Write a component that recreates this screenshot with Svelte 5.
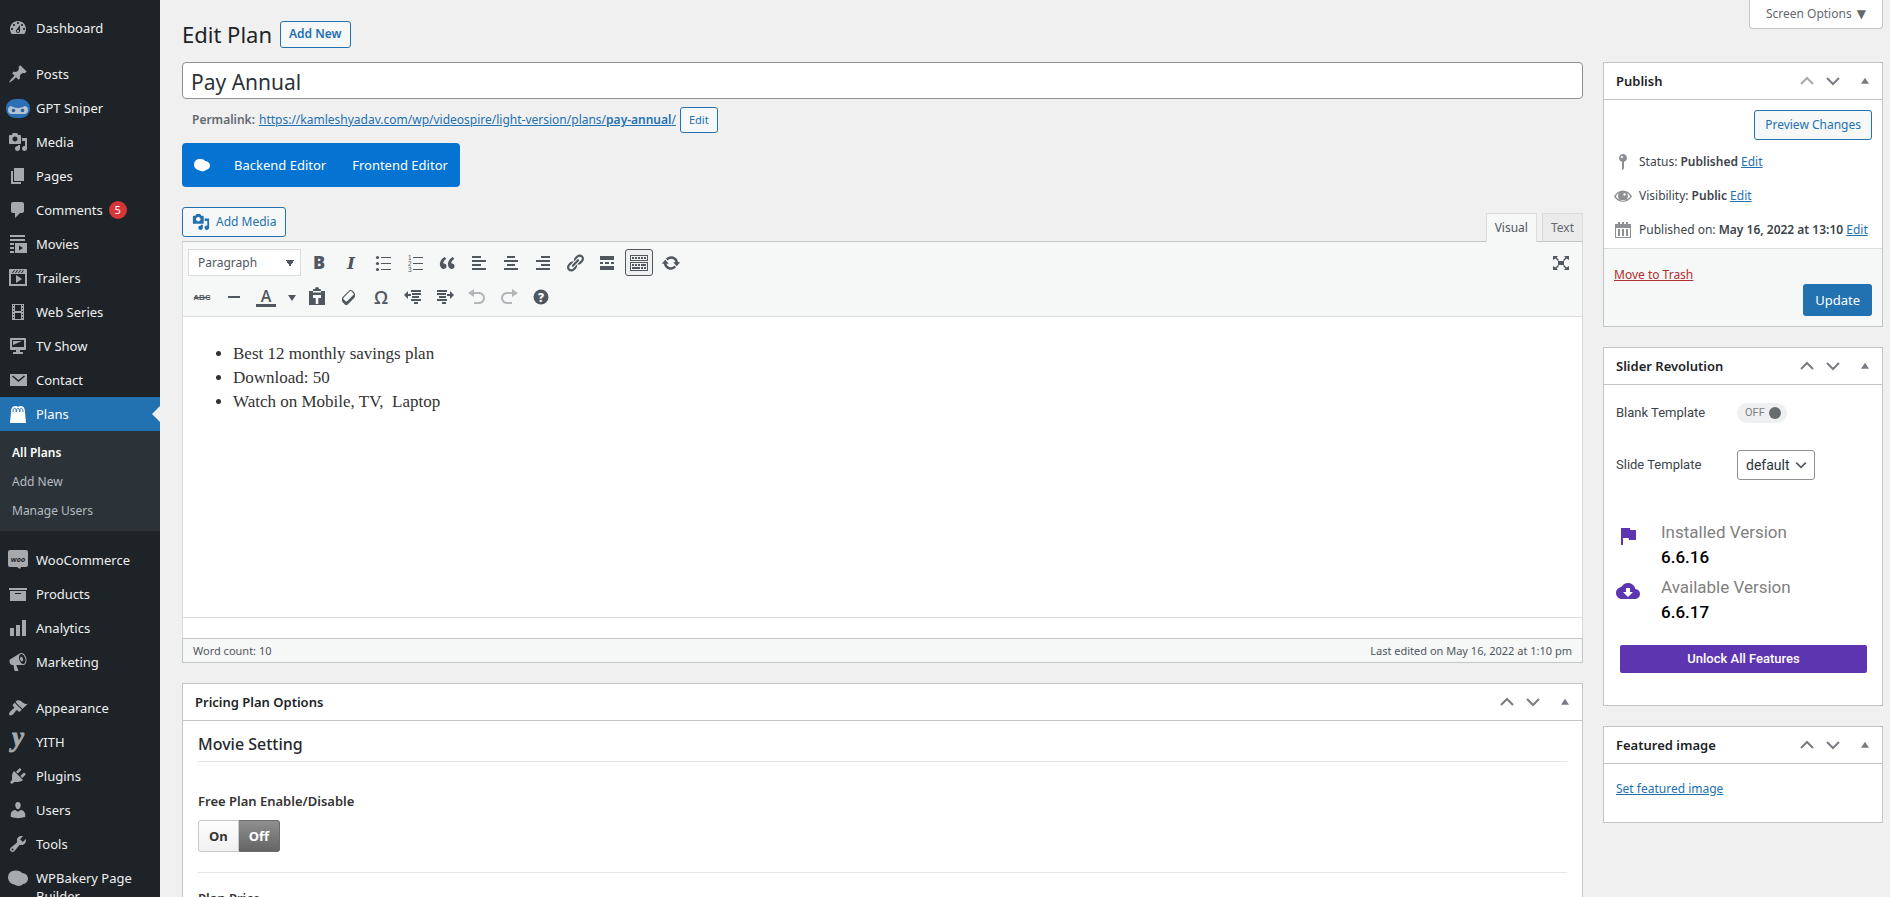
<script lang="ts">
  const path = (d: string) => `<path d="${d}"/>`
  const line = (d: string, w = 1.5) => `<path d="${d}" fill="none" stroke="currentColor" stroke-width="${w}"/>`
  const hole = (d: string) => `<path fill-rule="evenodd" d="${d}"/>`

  const icons: Record<string, string> = {
    dashboard: path('M3.76 16h12.48c1.1-1.37 1.76-3.11 1.76-5 0-4.42-3.58-8-8-8s-8 3.58-8 8c0 1.89.66 3.63 1.76 5zM10 4c.55 0 1 .45 1 1s-.45 1-1 1-1-.45-1-1 .45-1 1-1zM6 6c.55 0 1 .45 1 1s-.45 1-1 1-1-.45-1-1 .45-1 1-1zm8 0c.55 0 1 .45 1 1s-.45 1-1 1-1-.45-1-1 .45-1 1-1zm-5.37 5.55L12 7v6c0 1.1-.9 2-2 2s-2-.9-2-2c0-.57.24-1.08.63-1.45zM4 10c.55 0 1 .45 1 1s-.45 1-1 1-1-.45-1-1 .45-1 1-1zm12 0c.55 0 1 .45 1 1s-.45 1-1 1-1-.45-1-1 .45-1 1-1zm-5 3c0-.55-.45-1-1-1s-1 .45-1 1 .45 1 1 1 1-.45 1-1z'),
    pin: path('M10.44 3.02l1.82-1.82 6.36 6.35-1.83 1.82c-1.05-.68-2.48-.57-3.41.36l-.75.75c-.92.93-1.04 2.35-.35 3.41l-1.83 1.82-2.41-2.41-2.8 2.79c-.42.42-3.38 2.71-3.8 2.29s1.86-3.39 2.28-3.81l2.79-2.79L4.1 9.36l1.83-1.82c1.05.69 2.48.57 3.4-.36l.75-.75c.93-.92 1.05-2.35.36-3.41z'),
    sniper: '<rect x="-2" y="1" width="24" height="19" rx="9" fill="#2c6fb5"/><rect x="0" y="8" width="20" height="8" rx="4" fill="#b4c3d3"/><circle cx="5.5" cy="12.5" r="1.8" fill="#2c5d94"/><circle cx="14.5" cy="12.5" r="1.8" fill="#2c5d94"/><path d="M3 8q7 4 14 0z" fill="#2c6fb5"/>',
    media: path('M13 11V4c0-.55-.45-1-1-1h-1.67L9 1H5L3.67 3H2c-.55 0-1 .45-1 1v7c0 .55.45 1 1 1h10c.55 0 1-.45 1-1zM7 4.5c1.38 0 2.5 1.12 2.5 2.5S8.38 9.5 7 9.5 4.5 8.38 4.5 7 5.62 4.5 7 4.5zM14 6h5v10.5c0 1.38-1.12 2.5-2.5 2.5S14 17.88 14 16.5s1.12-2.5 2.5-2.5c.17 0 .34.02.5.05V9h-3V6zm-4 8.05V13h2v3.5c0 1.38-1.12 2.5-2.5 2.5S7 17.88 7 16.5 8.12 14 9.5 14c.17 0 .34.02.5.05z'),
    pages: path('M6 15V2h10v13H6zm-1 1h8v2H3V5h2v11z'),
    comments: path('M5 2h9c1.1 0 2 .9 2 2v7c0 1.1-.9 2-2 2h-2l-5 5v-5H5c-1.1 0-2-.9-2-2V4c0-1.1.9-2 2-2z'),
    movies: hole('M2 1h15v2H2zM2 5h15v2H2zM2 9h4v2H2zM2 13h4v2H2zM2 17h4v2H2zM7 9h12v10H7zM11 11.5v5l4-2.5z'),
    trailers: hole('M2 1h16c.55 0 1 .45 1 1v16H1V2c0-.55.45-1 1-1zM6 2L4 5h1l2-3zM9 2L7 5h1l2-3zM12 2l-2 3h1l2-3zM15 2l-2 3h1l2-3zM17 16V6H3v10zM8 7l6 4-6 4z'),
    series: hole('M4 2h12v16H4zM7 3v6h6V3zM7 11v6h6v-6zM5 3v1h1V3zM5 6v1h1V6zM5 9v1h1V9zM5 12v1h1v-1zM5 15v1h1v-1zM14 3v1h1V3zM14 6v1h1V6zM14 9v1h1V9zM14 12v1h1v-1zM14 15v1h1v-1z'),
    tv: path('M3 2h14c.55 0 1 .45 1 1v10c0 .55-.45 1-1 1h-5v2h2c.55 0 1 .45 1 1v1H5v-1c0-.55.45-1 1-1h2v-2H3c-.55 0-1-.45-1-1V3c0-.55.45-1 1-1zm13 9V4H4v7h12zM5 5h9L5 9V5z'),
    email: path('M2 4h17v12H2z') + '<path d="M4.5 6l6 5 6-5" fill="none" stroke="#1d2327" stroke-width="1.6"/>',
    bag: path('M2 19L3 8c0-4 1.5-6 4-6 1.4 0 2.3.3 3 1 .7-.7 1.6-1 3-1 2.5 0 4 2 4 6l1 11z') + '<path d="M5 8c0-5 3.3-5 3.3 0M8.3 8c0-5 3.4-5 3.4 0M11.7 8c0-5 3.3-5 3.3 0" fill="none" stroke="#2271b1" stroke-width="1"/>',
    woo: path('M2 0h16a2 2 0 0 1 2 2v13a2 2 0 0 1-2 2h-5l-1 2-3-2H2a2 2 0 0 1-2-2V2a2 2 0 0 1 2-2z') + '<text x="10" y="12" text-anchor="middle" font-family="Lato, sans-serif" font-size="8" font-weight="900" font-style="italic" fill="#1d2327">woo</text>',
    archive: path('M19 4v2H1V4h18zM2 7h16v10H2V7zm11 3V9H7v1h6z'),
    chart: path('M18 18V2h-4v16h4zm-6 0V7H8v11h4zm-6 0v-8H2v8h4z'),
    megaphone: path('M18.15 5.94c.46 1.62.38 3.22-.02 4.48-.42 1.28-1.26 2.18-2.3 2.48-.16.06-.26.06-.4.06-.06.02-.12.02-.18.02-.06.02-.14.02-.22.02h-6.8l2.22 5.5c.02.14-.06.26-.14.34-.08.1-.24.16-.34.16H6.95c-.1 0-.26-.06-.34-.16-.08-.08-.16-.2-.14-.34l-1-5.5H4.25l-.02-.02c-.5.06-1.08-.18-1.54-.62s-.88-1.08-1.06-1.88c-.24-.8-.2-1.56-.02-2.2.18-.62.58-1.08 1.06-1.3l.02-.02 9-5.4c.1-.06.18-.1.24-.16.06-.04.14-.08.24-.12.16-.08.28-.12.5-.18 1.04-.3 2.24.1 3.22.98s1.84 2.24 2.26 3.86zm-2.58 5.98h-.02c.4-.1.74-.34 1.04-.7.58-.7.86-1.76.86-3.04 0-.64-.1-1.3-.28-1.98-.34-1.36-1.02-2.5-1.78-3.24s-1.68-1.1-2.46-.88c-.82.22-1.4.96-1.7 2-.32 1.04-.28 2.36.06 3.72.38 1.36 1 2.5 1.8 3.24.78.74 1.62 1.1 2.48.88zm-2.54-7.08c.22-.04.42-.02.62.04.38.16.76.48 1.02 1s.42 1.2.42 1.78c0 .3-.04.56-.12.8-.18.48-.44.84-.86.94-.34.1-.8-.06-1.14-.4s-.64-.86-.78-1.5c-.18-.62-.12-1.24.02-1.72s.48-.84.82-.94z'),
    brush: path('M14.48 11.06L7.41 3.99l1.5-1.5c.5-.56 2.3-.47 3.51.32 1.21.8 1.43 1.28 2.91 2.1 1.18.64 2.45 1.26 4.45.85zm-.71.71L6.7 4.7 4.93 6.47c-.39.39-.39 1.02 0 1.41l1.06 1.06c.39.39.39 1.03 0 1.42-.6.6-1.43 1.11-2.21 1.69-.35.26-.7.53-1.01.84C1.43 14.23.4 16.08 1.4 17.07c.99 1 2.84-.03 4.18-1.36.31-.31.58-.66.85-1.02.57-.78 1.08-1.61 1.69-2.21.39-.39 1.02-.39 1.41 0l1.06 1.06c.39.39 1.02.39 1.41 0z'),
    yith: '<text x="10" y="14" text-anchor="middle" font-family="Liberation Serif, serif" font-size="27" font-weight="700" font-style="italic" stroke="currentColor" stroke-width=".8">y</text>',
    plug: path('M13.11 4.36L9.87 7.6 8 5.73l3.24-3.24c.35-.34 1.05-.2 1.56.32.52.51.66 1.21.31 1.55zm-8 1.77l.91-1.12 9.01 9.01-1.19.84c-.71.71-2.63 1.16-3.82 1.16H6.14L4.9 17.26c-.59.59-1.54.59-2.12 0-.59-.58-.59-1.53 0-2.12l1.24-1.24v-3.88c0-1.13.4-3.19 1.09-3.89zm7.26 3.97l3.24-3.24c.34-.35 1.04-.21 1.55.31.52.51.66 1.21.31 1.55l-3.24 3.25z'),
    user: path('M10 9.25c-2.27 0-2.73-3.44-2.73-3.44C7 4.02 7.82 2 9.97 2c2.16 0 2.98 2.02 2.71 3.81 0 0-.41 3.44-2.68 3.44zm0 2.57L12.72 10c2.39 0 4.52 2.33 4.52 4.53v2.49s-3.65 1.13-7.24 1.13c-3.65 0-7.24-1.13-7.24-1.13v-2.49c0-2.25 1.94-4.48 4.47-4.48z'),
    wrench: path('M16.68 9.77c-1.34 1.34-3.3 1.67-4.95.99l-5.41 6.52c-.99.99-2.59.99-3.58 0s-.99-2.59 0-3.57l6.52-5.42c-.68-1.65-.35-3.61.99-4.95 1.28-1.28 3.12-1.62 4.72-1.06l-2.89 2.89 2.82 2.82 2.86-2.87c.53 1.58.18 3.39-1.08 4.65zM3.81 16.21c.4.39 1.04.39 1.43 0 .4-.4.4-1.04 0-1.43-.39-.4-1.03-.4-1.43 0-.39.39-.39 1.03 0 1.43z'),
    blob: path('M0 9a7 6.5 0 0 1 8-6.5c3 0 5 1 6 2.500 3.500.3 6 2.500 6 5.500 0 3.500-3 5.500-5 5.500-1.500 2.500-7 2.500-8.500.5C2.500 16 0 13 0 9z'),
    bold: '<text x="10" y="16" text-anchor="middle" font-family="Open Sans, sans-serif" font-size="18" font-weight="800">B</text>',
    italic: '<text x="10" y="16" text-anchor="middle" font-family="DejaVu Serif, serif" font-size="17" font-weight="700" font-style="italic">I</text>',
    ul: path('M8 4h10v1H8zM8 10h10v1H8zM8 16h10v1H8z') + '<circle cx="4.500" cy="4.500" r="1.600"/><circle cx="4.500" cy="10.500" r="1.600"/><circle cx="4.500" cy="16.500" r="1.600"/>',
    ol: path('M8 4h10v1H8zM8 10h10v1H8zM8 16h10v1H8z') + '<g font-family="Liberation Sans, sans-serif" font-size="6.500"><text x="3" y="6.500">1</text><text x="3" y="12.500">2</text><text x="3" y="19">3</text></g>',
    quote: path('M9.49 13.22c0-.74-.2-1.38-.61-1.9-.62-.78-1.83-.88-2.53-.72-.29-1.65 1.11-3.75 2.92-4.65L7.88 4c-2.73 1.3-5.42 4.28-4.96 8.05C3.21 14.43 4.59 16 6.54 16c.85 0 1.56-.25 2.12-.75s.83-1.18.83-2.03zm8.05 0c0-.74-.2-1.38-.61-1.9-.63-.78-1.83-.88-2.53-.72-.29-1.65 1.11-3.75 2.92-4.65L15.93 4c-2.73 1.3-5.41 4.28-4.95 8.05.29 2.38 1.66 3.95 3.61 3.95.85 0 1.56-.25 2.12-.75s.83-1.18.83-2.03z'),
    left: path('M12 5V3H3v2h9zm5 4V7H3v2h14zm-5 4v-2H3v2h9zm5 4v-2H3v2h14z'),
    center: path('M14 5V3H6v2h8zm3 4V7H3v2h14zm-3 4v-2H6v2h8zm3 4v-2H3v2h14z'),
    right: path('M17 5V3H8v2h9zm0 4V7H3v2h14zm0 4v-2H8v2h9zm0 4v-2H3v2h14z'),
    link: path('M17.74 2.76c1.68 1.69 1.68 4.41 0 6.1l-1.53 1.52c-1.12 1.12-2.7 1.47-4.14 1.09l2.62-2.61.76-.77.76-.76c.84-.84.84-2.2 0-3.04-.84-.85-2.2-.85-3.04 0l-.77.76-3.38 3.38c-.37-1.44-.02-3.02 1.1-4.14l1.52-1.53c1.69-1.68 4.42-1.68 6.1 0zM8.59 13.43l5.34-5.34c.42-.42.42-1.1 0-1.52-.44-.43-1.13-.39-1.53 0l-5.33 5.34c-.42.42-.42 1.1 0 1.52.44.43 1.13.39 1.52 0zm-.76 2.29l4.14-4.15c.38 1.44.03 3.02-1.09 4.14l-1.52 1.53c-1.69 1.68-4.41 1.68-6.1 0-1.68-1.68-1.68-4.42 0-6.1l1.53-1.52c1.12-1.12 2.7-1.47 4.14-1.1l-4.14 4.15c-.85.84-.85 2.2 0 3.05.84.84 2.2.84 3.04 0z'),
    more: path('M17 7V3H3v4h14zM6 11V9H3v2h3zm6 0V9H8v2h4zm5 0V9h-3v2h3zm0 6v-4H3v4h14z'),
    sink: path('M19 2v6H1V2h18zm-1 5V3H2v4h16zM5 4v2H3V4h2zm3 0v2H6V4h2zm3 0v2H9V4h2zm3 0v2h-2V4h2zm3 0v2h-2V4h2zm2 5v9H1V9h18zm-1 8v-7H2v7h16zM5 11v2H3v-2h2zm3 0v2H6v-2h2zm3 0v2H9v-2h2zm6 0v2h-5v-2h5zm-6 3v2H3v-2h8zm3 0v2h-2v-2h2zm3 0v2h-2v-2h2z'),
    update: path('M10.2 3.28c3.53 0 6.43 2.61 6.92 6h2.08l-3.5 4-3.5-4h2.32c-.45-1.97-2.21-3.45-4.32-3.45-1.45 0-2.73.71-3.54 1.78L4.95 5.66C6.23 4.2 8.11 3.28 10.2 3.28zm-.4 13.44c-3.52 0-6.43-2.61-6.92-6H.8l3.5-4c1.17 1.33 2.33 2.67 3.5 4H5.48c.45 1.97 2.21 3.45 4.32 3.45 1.45 0 2.73-.71 3.54-1.78l1.71 1.95c-1.28 1.46-3.15 2.38-5.25 2.38z'),
    strike: '<text x="10" y="13" text-anchor="middle" font-family="Liberation Sans, sans-serif" font-size="8" font-weight="700">ABC</text>' + path('M2 10h16v1H2z'),
    hr: path('M4 9h12v2H4z'),
    color: '<text x="10" y="15" text-anchor="middle" font-family="Open Sans, sans-serif" font-size="16" font-weight="600">A</text>' + path('M0 17h20v3H0z'),
    caret: path('M6 8h8l-4 6z'),
    paste: path('M6 4V3c0-.5.4-1 1-1h1a2 2 0 0 1 4 0h1c.6 0 1 .5 1 1v1h4v14H2V4z') + '<path d="M6 4h8v1.500H6zM6 8h8v3h-2.700v6H8.700v-6H6z" fill="#f6f7f7"/>',
    eraser: path('M14.29 4.59l1.1 1.11c.41.4.61.94.61 1.47v2.12c0 .53-.2 1.07-.61 1.47l-6.63 6.63c-.4.41-.94.61-1.47.61s-1.07-.2-1.47-.61l-1.11-1.1-1.1-1.11c-.41-.4-.61-.94-.61-1.47v-2.12c0-.54.2-1.07.61-1.48l6.63-6.62c.4-.41.94-.61 1.47-.61s1.06.2 1.47.61zm-6.21 9.7l6.42-6.42c.39-.39.39-1.03 0-1.43L12.36 4.3c-.19-.19-.45-.29-.72-.29s-.52.1-.71.29l-6.42 6.42c-.39.4-.39 1.04 0 1.43l2.14 2.14c.38.38 1.04.38 1.43 0z'),
    omega: '<text x="10" y="17" text-anchor="middle" font-family="Open Sans, sans-serif" font-size="18" font-weight="600">Ω</text>',
    outdent: path('M8 3h10v2H8zM9 6h9v2H9zM9 9h7v2H9zM8 12h10v2H8zM11 15h4v2h-4zM1 8l4-4v3h3v2H5v3z'),
    indent: path('M2 3h10v2H2zM2 6h9v2H2zM4 9h7v2H4zM2 12h10v2H2zM7 15h4v2H7zM19 8l-4-4v3h-3v2h3v3z'),
    undo: path('M12 5H7V2L1 6l6 4V7h5c2.2 0 4 1.8 4 4s-1.8 4-4 4H7v2h5c3.3 0 6-2.7 6-6s-2.7-6-6-6z'),
    redo: path('M8 5h5V2l6 4-6 4V7H8c-2.2 0-4 1.8-4 4s1.8 4 4 4h5v2H8c-3.3 0-6-2.7-6-6s2.7-6 6-6z'),
    help: '<circle cx="10" cy="10" r="7.500"/><text x="10" y="14.500" text-anchor="middle" font-family="Open Sans, sans-serif" font-size="12" font-weight="800" fill="#f6f7f7">?</text>',
    expand: path('M7 8h6v4H7zM2 3h5L5.5 4.5 8 7 7 8 4.5 5.5 2 7zM18 3h-5l1.5 1.5L12 7l1 1 2.5-2.5L18 7zM2 17h5l-1.5-1.5L8 13l-1-1-2.5 2.5L2 13zM18 17h-5l1.5-1.5L12 13l1-1 2.5 2.5L18 13z'),
    up: line('M4 13l6-6 6 6', 2),
    down: line('M4 7l6 6 6-6', 2),
    toggle: path('M5 13.5h10L10 6z'),
    status: path('M14 6c0 1.86-1.28 3.41-3 3.86V16c0 1-2 2-2 2V9.86c-1.72-.45-3-2-3-3.86 0-2.21 1.79-4 4-4s4 1.79 4 4zM8 5c0 .55.45 1 1 1s1-.45 1-1-.45-1-1-1-1 .45-1 1z'),
    eye: hole('M1 10.5C5 2.5 15 2.5 19 10.5 15 17.5 5 17.5 1 10.5zM2.8 10.5c3.2 5 11.2 5 14.4 0-1-1.7-2-2.8-3.5-3.5 1 1 1.3 2 1.3 3a5 5 0 0 1-10 0c0-1 .3-2 1.3-3-1.5.7-2.5 1.8-3.5 3.5z') + '<circle cx="11.5" cy="8.5" r="1.2" fill="#fff"/>',
    calendar: hole('M2 4h3V2h2v2h2V2h2v2h2V2h2v2h3v14H2zM3 8v9h14V8zM5 9h2v7H5zM9 9h2v7H9zM13 9h2v7h-2z')
  }

  const menu = [
    [['dashboard', 'Dashboard']],
    [
      ['pin', 'Posts'],
      ['sniper', 'GPT Sniper'],
      ['media', 'Media'],
      ['pages', 'Pages'],
      ['comments', 'Comments', '5'],
      ['movies', 'Movies'],
      ['trailers', 'Trailers'],
      ['series', 'Web Series'],
      ['tv', 'TV Show'],
      ['email', 'Contact'],
      ['bag', 'Plans']
    ],
    [
      ['woo', 'WooCommerce'],
      ['archive', 'Products'],
      ['chart', 'Analytics'],
      ['megaphone', 'Marketing']
    ],
    [
      ['brush', 'Appearance'],
      ['yith', 'YITH'],
      ['plug', 'Plugins'],
      ['user', 'Users'],
      ['wrench', 'Tools'],
      ['blob', 'WPBakery Page Builder']
    ]
  ]
  const submenu = ['All Plans', 'Add New', 'Manage Users']

  const toolbarTop = [
    ['bold', 'Bold'],
    ['italic', 'Italic'],
    ['ul', 'Bulleted list'],
    ['ol', 'Numbered list'],
    ['quote', 'Blockquote'],
    ['left', 'Align left'],
    ['center', 'Align center'],
    ['right', 'Align right'],
    ['link', 'Insert link'],
    ['more', 'Insert Read More tag'],
    ['sink', 'Toolbar Toggle'],
    ['update', 'Refresh']
  ]
  const toolbarBottom = [
    ['strike', 'Strikethrough'],
    ['hr', 'Horizontal line'],
    ['color', 'Text color'],
    ['caret', 'Choose color'],
    ['paste', 'Paste as text'],
    ['eraser', 'Clear formatting'],
    ['omega', 'Special character'],
    ['outdent', 'Decrease indent'],
    ['indent', 'Increase indent'],
    ['undo', 'Undo'],
    ['redo', 'Redo'],
    ['help', 'Keyboard Shortcuts']
  ]

  let title = $state('Pay Annual')
  let freePlan = $state('off')
  let blankTemplate = $state(false)
</script>

{#snippet icon(name: string, size = 20)}
  <svg class="icon" viewBox="0 0 20 20" width={size} height={size} aria-hidden="true">{@html icons[name]}</svg>
{/snippet}

{#snippet boxHeader(text: string, first = false)}
  <header class="box-header">
    <h2>{text}</h2>
    <button class="handle" class:disabled={first} aria-label="Move up">{@render icon('up')}</button>
    <button class="handle" aria-label="Move down">{@render icon('down')}</button>
    <button class="handle toggle" aria-label="Toggle panel">{@render icon('toggle', 16)}</button>
  </header>
{/snippet}

<div class="page">
  <nav class="sidebar">
    {#each menu as group}
      <ul class="group">
        {#each group as [name, label, count]}
          <li>
            <a class="item" class:current={label === 'Plans'} href="#top">
              {@render icon(name)}
              <span>{label}</span>
              {#if count}<span class="badge">{count}</span>{/if}
            </a>
            {#if label === 'Plans'}
              <ul class="submenu">
                {#each submenu as sub, i}
                  <li><a class:active={i === 0} href="#top">{sub}</a></li>
                {/each}
              </ul>
            {/if}
          </li>
        {/each}
      </ul>
    {/each}
  </nav>

  <div class="content">
    <div class="top">
      <div class="heading">
        <h1>Edit Plan</h1>
        <button class="button add-new">Add New</button>
      </div>
      <button class="screen-options">Screen Options <span class="tri">▼</span></button>
    </div>

    <div class="columns">
      <main>
        <input class="title" aria-label="Title" bind:value={title} />
        <div class="permalink">
          <strong>Permalink:</strong>
          <a href="#top">https://kamleshyadav.com/wp/videospire/light-version/plans/<b>pay-annual</b>/</a>
          <button class="button small">Edit</button>
        </div>

        <div class="builder">
          {@render icon('blob', 16)}
          <button>Backend Editor</button>
          <button>Frontend Editor</button>
        </div>

        <div class="media-row">
          <button class="button media">{@render icon('media', 18)}Add Media</button>
          <div class="tabs">
            <button class="tab active">Visual</button>
            <button class="tab">Text</button>
          </div>
        </div>

        <section class="editor">
          <div class="toolbar">
            <div class="tool-row">
              <select class="format" aria-label="Format"><option>Paragraph</option></select>
              {#each toolbarTop as [name, label]}
                <button class="tool" class:pressed={name === 'sink'} aria-label={label}>{@render icon(name)}</button>
              {/each}
              <button class="tool expand" aria-label="Distraction-free mode">{@render icon('expand')}</button>
            </div>
            <div class="tool-row">
              {#each toolbarBottom as [name, label]}
                <button
                  class="tool"
                  class:narrow={name === 'caret'}
                  class:off={name === 'undo' || name === 'redo'}
                  aria-label={label}>{@render icon(name)}</button
                >
              {/each}
            </div>
          </div>
          <div class="text">
            <ul>
              <li>Best 12 monthly savings plan</li>
              <li>Download: 50</li>
              <li>Watch on Mobile, TV,&nbsp; Laptop</li>
            </ul>
          </div>
          <div class="path"></div>
        </section>
        <div class="status-bar">
          <span>Word count: 10</span>
          <span>Last edited on May 16, 2022 at 1:10 pm</span>
        </div>

        <section class="box pricing">
          {@render boxHeader('Pricing Plan Options')}
          <div class="fields">
            <h3>Movie Setting</h3>
            <fieldset>
              <legend>Free Plan Enable/Disable</legend>
              <div class="switch">
                <label class:on={freePlan === 'on'}><input type="radio" value="on" bind:group={freePlan} />On</label>
                <label class:on={freePlan === 'off'}><input type="radio" value="off" bind:group={freePlan} />Off</label>
              </div>
            </fieldset>
            <div class="field">
              <label for="price">Plan Price</label>
              <input id="price" type="text" />
            </div>
          </div>
        </section>
      </main>

      <aside>
        <section class="box">
          {@render boxHeader('Publish', true)}
          <div class="preview"><button class="button">Preview Changes</button></div>
          <div class="meta">{@render icon('status')}<span>Status: <b>Published</b> <a href="#top">Edit</a></span></div>
          <div class="meta">{@render icon('eye')}<span>Visibility: <b>Public</b> <a href="#top">Edit</a></span></div>
          <div class="meta">
            {@render icon('calendar')}<span>Published on: <b>May 16, 2022 at 13:10</b> <a href="#top">Edit</a></span>
          </div>
          <div class="actions">
            <a class="trash" href="#top">Move to Trash</a>
            <button class="primary">Update</button>
          </div>
        </section>

        <section class="box">
          {@render boxHeader('Slider Revolution')}
          <div class="slider">
            <div class="option">
              <label for="blank">Blank Template</label>
              <span class="pill">
                <input id="blank" type="checkbox" bind:checked={blankTemplate} />
                {blankTemplate ? 'ON' : 'OFF'}<i></i>
              </span>
            </div>
            <div class="option">
              <label for="template">Slide Template</label>
              <span class="select">
                <select id="template"><option>default</option></select>
                {@render icon('down', 16)}
              </span>
            </div>
            <div class="versions">
              <svg viewBox="0 0 24 24" width="24" height="24" aria-hidden="true"><path d="M14.4 6L14 4H5v17h2v-7h5.6l.4 2h7V6z" /></svg>
              <p>Installed Version<b>6.6.16</b></p>
              <svg viewBox="0 0 24 24" width="24" height="24" aria-hidden="true"
                ><path d="M19.35 10.04C18.67 6.59 15.64 4 12 4 9.11 4 6.6 5.64 5.35 8.04 2.34 8.36 0 10.91 0 14c0 3.31 2.69 6 6 6h13c2.76 0 5-2.24 5-5 0-2.64-2.05-4.78-4.65-4.96zM17 13l-5 5-5-5h3V9h4v4h3z" /></svg
              >
              <p>Available Version<b>6.6.17</b></p>
            </div>
            <button class="unlock">Unlock All Features</button>
          </div>
        </section>

        <section class="box">
          {@render boxHeader('Featured image')}
          <div class="featured"><a href="#top">Set featured image</a></div>
        </section>
      </aside>
    </div>
  </div>
</div>

<style>
  :global(html) {
    scrollbar-width: none;
  }
  :global(body) {
    margin: 0;
    background: #f0f0f1;
  }
  * {
    box-sizing: border-box;
  }
  .page {
    display: flex;
    height: 100vh;
    overflow: hidden;
    font-family: 'Noto Sans', 'Open Sans', sans-serif;
    font-size: 12px;
    line-height: 18px;
    color: #3c434a;
  }
  button,
  input,
  select {
    font: inherit;
    color: inherit;
    margin: 0;
  }
  button {
    padding: 0;
    border: 0;
    background: none;
    cursor: pointer;
    white-space: nowrap;
  }
  a {
    color: #2271b1;
  }
  ul,
  h1,
  h2,
  h3,
  p {
    margin: 0;
    padding: 0;
  }
  b,
  strong {
    font-weight: 600;
  }
  .icon {
    fill: currentColor;
    flex: none;
    overflow: visible;
  }

  .sidebar {
    width: 160px;
    flex: none;
    padding-top: 11px;
    background: #1d2327;
    font-size: 13px;
  }
  .sidebar ul {
    list-style: none;
  }
  .group {
    margin-bottom: 12px;
  }
  .item {
    position: relative;
    display: flex;
    align-items: flex-start;
    gap: 8px;
    padding: 8px 8px;
    min-height: 34px;
    color: #f0f0f1;
    text-decoration: none;
  }
  .item .icon {
    margin: -1px 0;
    color: #a7aaad;
  }
  .item.current {
    background: #2271b1;
    color: #fff;
  }
  .item.current .icon {
    color: #fff;
  }
  .item.current::after {
    content: '';
    position: absolute;
    right: 0;
    top: 9px;
    border: 8px solid transparent;
    border-right-color: #f0f0f1;
    border-left-width: 0;
  }
  .badge {
    width: 18px;
    height: 18px;
    margin-left: -2px;
    border-radius: 9px;
    background: #d63638;
    color: #fff;
    font-size: 11px;
    text-align: center;
  }
  .submenu {
    padding: 7px 12px 6px;
    background: #2c3338;
    font-size: 12px;
    line-height: 29px;
  }
  .submenu a {
    color: #b5bcc2;
    text-decoration: none;
  }
  .submenu a.active {
    color: #fff;
    font-weight: 600;
  }

  .content {
    flex: 1;
    min-width: 0;
    padding: 0 7px 0 22px;
  }
  .top {
    display: flex;
    justify-content: space-between;
    align-items: flex-start;
    height: 62px;
  }
  .heading {
    display: flex;
    gap: 8px;
    align-items: center;
    padding-top: 20px;
  }
  h1 {
    font-size: 22px;
    font-weight: 400;
    line-height: 28px;
    color: #1d2327;
  }
  .button {
    height: 30px;
    padding: 0 10px;
    border: 1px solid #2271b1;
    border-radius: 3px;
    background: #f6f7f7;
    color: #2271b1;
  }
  .button.add-new {
    height: 27px;
    padding: 0 8px;
    font-weight: 600;
  }
  .button.small {
    height: 26px;
    padding: 0 8px;
    font-size: 11px;
  }
  .screen-options {
    height: 29px;
    padding: 0 16px;
    border: 1px solid #c3c4c7;
    border-top: 0;
    border-radius: 0 0 4px 4px;
    background: #fff;
    color: #646970;
  }
  .tri {
    margin-left: 2px;
    font-family: 'DejaVu Sans', sans-serif;
  }
  .columns {
    display: flex;
    gap: 20px;
    align-items: flex-start;
  }
  main {
    flex: 1;
    min-width: 0;
  }
  aside {
    width: 280px;
    flex: none;
    display: grid;
    gap: 20px;
  }

  .title {
    display: block;
    width: 100%;
    height: 37px;
    padding: 4px 8px 2px;
    border: 1px solid #8c8f94;
    border-radius: 4px;
    background: #fff;
    font-size: 21px;
    line-height: 30px;
    color: #2c3338;
  }
  .permalink {
    display: flex;
    align-items: center;
    gap: 4px;
    padding: 8px 10px 10px;
    color: #646970;
  }
  .builder {
    display: flex;
    width: fit-content;
    align-items: center;
    height: 44px;
    padding: 0 12px;
    border-radius: 4px;
    background: #0473d1;
    color: #fff;
    font-size: 13px;
  }
  .builder button + button {
    margin-left: 26px;
  }
  .builder .icon {
    margin-right: 24px;
  }
  .media-row {
    display: flex;
    justify-content: space-between;
    align-items: flex-end;
    margin-top: 20px;
    height: 34px;
  }
  .button.media {
    display: flex;
    align-items: center;
    gap: 6px;
    margin-bottom: 4px;
    padding: 0 9px;
  }
  .tabs {
    display: flex;
    gap: 5px;
  }
  .tab {
    height: 28px;
    padding: 0 8px;
    border: 1px solid #dcdcde;
    border-bottom: 0;
    background: #ebebec;
    color: #646970;
  }
  .tab.active {
    position: relative;
    height: 29px;
    margin-bottom: -1px;
    background: #f6f7f7;
    color: #50575e;
  }
  .editor {
    border: 1px solid #dcdcde;
    border-top-color: #c3c4c7;
    border-bottom: 0;
    background: #fff;
  }
  .toolbar {
    display: grid;
    gap: 5px;
    padding: 6px 5px 5px 3px;
    border-bottom: 1px solid #dcdcde;
    background: #f6f7f7;
  }
  .tool-row {
    display: flex;
    height: 29px;
    align-items: center;
  }
  .format {
    width: 113px;
    height: 27px;
    margin: 0 2px;
    padding: 0 9px;
    border: 1px solid #dcdcde;
    appearance: none;
    background:
      linear-gradient(to bottom right, #50575e 50%, transparent 50%) 101px 10px / 4px 7px no-repeat,
      linear-gradient(to bottom left, #50575e 50%, transparent 50%) 97px 10px / 4px 7px no-repeat,
      #fff;
    color: #50575e;
  }
  .tool {
    width: 28px;
    height: 27px;
    margin: 0 2px;
    display: flex;
    align-items: center;
    justify-content: center;
    border: 1px solid transparent;
    border-radius: 3px;
    color: #50575e;
  }
  .tool.narrow {
    width: 15px;
  }
  .tool.off {
    opacity: 0.4;
  }
  .tool.pressed {
    border-color: #50575e;
    background: #f0f0f1;
  }
  .tool.expand {
    margin-left: auto;
  }
  .text {
    height: 300px;
    padding: 25px 9px;
    font-family: 'Liberation Serif', serif;
    font-size: 17px;
    line-height: 24px;
    color: #333;
  }
  .text ul {
    padding-left: 41px;
  }
  .path {
    height: 21px;
    border-top: 1px solid #dcdcde;
  }
  .status-bar {
    display: flex;
    justify-content: space-between;
    padding: 3px 10px;
    border: 1px solid #c3c4c7;
    background: #f6f7f7;
    font-size: 11px;
    line-height: 17px;
    color: #50575e;
  }

  .box {
    border: 1px solid #c3c4c7;
    background: #fff;
  }
  .pricing {
    margin-top: 20px;
  }
  .box-header {
    display: flex;
    align-items: center;
    height: 37px;
    padding: 0 4px 0 12px;
    border-bottom: 1px solid #c3c4c7;
  }
  .box-header h2 {
    flex: 1;
    font-size: 13px;
    font-weight: 600;
    color: #1d2327;
  }
  .handle {
    width: 26px;
    height: 36px;
    display: grid;
    place-items: center;
    color: #787c82;
  }
  .handle.disabled {
    color: #a7aaad;
  }
  .handle.toggle {
    margin-left: 6px;
  }
  .fields {
    padding: 10px 15px;
  }
  h3 {
    padding-bottom: 4px;
    border-bottom: 1px solid #e5e5e5;
    font-size: 16px;
    font-weight: 500;
    line-height: 26px;
    color: #23282d;
  }
  fieldset {
    margin: 0;
    padding: 30px 0 20px;
    border: 0;
    border-bottom: 1px solid #e5e5e5;
  }
  legend,
  .field label {
    padding: 0;
    font-size: 13px;
    font-weight: 600;
    color: #333;
  }
  legend {
    float: left;
    width: 100%;
    margin-bottom: 10px;
  }
  .switch {
    display: inline-flex;
    vertical-align: top;
    clear: both;
  }
  .switch label {
    height: 32px;
    padding: 0 10px;
    border: 1px solid #c8c8c8;
    border-radius: 3px 0 0 3px;
    background: linear-gradient(#fdfdfd, #f1f1f1);
    font-weight: 700;
    font-size: 13px;
    line-height: 30px;
    color: #333;
  }
  .switch label + label {
    border-radius: 0 3px 3px 0;
    border-left: 0;
  }
  .switch label.on {
    border-color: #6b6b6b;
    background: linear-gradient(#8f8f8f, #646464);
    color: #fff;
  }
  .switch input,
  .pill input {
    position: absolute;
    opacity: 0;
    width: 1px;
    height: 1px;
  }
  .field {
    display: grid;
    gap: 10px;
    padding-top: 16px;
  }
  .field input {
    height: 32px;
    border: 1px solid #8c8f94;
  }

  .preview {
    display: flex;
    justify-content: flex-end;
    padding: 10px 10px 5px;
  }
  .meta {
    display: flex;
    align-items: center;
    gap: 6px;
    height: 34px;
    padding-left: 9px;
    white-space: nowrap;
  }
  .meta .icon {
    color: #8c8f94;
  }
  .actions {
    display: flex;
    justify-content: space-between;
    margin-top: 1px;
    padding: 17px 10px 10px;
    border-top: 1px solid #dcdcde;
    background: #f6f7f7;
  }
  .trash {
    color: #b32d2e;
  }
  .primary {
    height: 32px;
    margin-top: 18px;
    padding: 0 12px;
    border-radius: 3px;
    background: #2271b1;
    color: #fff;
    font-size: 13px;
  }
  .slider {
    padding: 12px 12px 32px;
    font-family: Roboto, sans-serif;
  }
  .option {
    display: flex;
    align-items: center;
    height: 32px;
    margin-bottom: 20px;
  }
  .option label {
    width: 121px;
    font-size: 13px;
  }
  .pill {
    display: inline-flex;
    align-items: center;
    gap: 4px;
    height: 20px;
    padding: 0 6px 0 8px;
    border-radius: 10px;
    background: #eff0f1;
    font-size: 11px;
    color: #7a7f82;
  }
  .pill i {
    width: 12px;
    height: 12px;
    border-radius: 6px;
    background: #666d6f;
  }
  .select {
    display: inline-grid;
    align-items: center;
  }
  .select select,
  .select .icon {
    grid-area: 1 / 1;
  }
  .select select {
    width: 78px;
    height: 30px;
    padding: 0 8px;
    border: 1px solid #8c8f94;
    border-radius: 3px;
    appearance: none;
    background: #fff;
    font-size: 14px;
    color: #2c3338;
  }
  .select .icon {
    justify-self: end;
    margin-right: 6px;
    pointer-events: none;
    color: #50575e;
  }
  .versions {
    display: grid;
    grid-template-columns: 45px 1fr;
    row-gap: 5px;
    margin-top: 39px;
    font-size: 17px;
    line-height: 25px;
    color: #808080;
  }
  .versions svg {
    margin-top: 4px;
    fill: #5e35b1;
  }
  .versions b {
    display: block;
    font-weight: 500;
    color: #000;
  }
  .unlock {
    display: block;
    width: calc(100% - 7px);
    height: 28px;
    margin: 20px 3px 0 4px;
    border-radius: 2px;
    background: #5e35b1;
    color: #fff;
    font-size: 13px;
    font-weight: 500;
  }
  .featured {
    padding: 16px 12px 24px;
  }
</style>
